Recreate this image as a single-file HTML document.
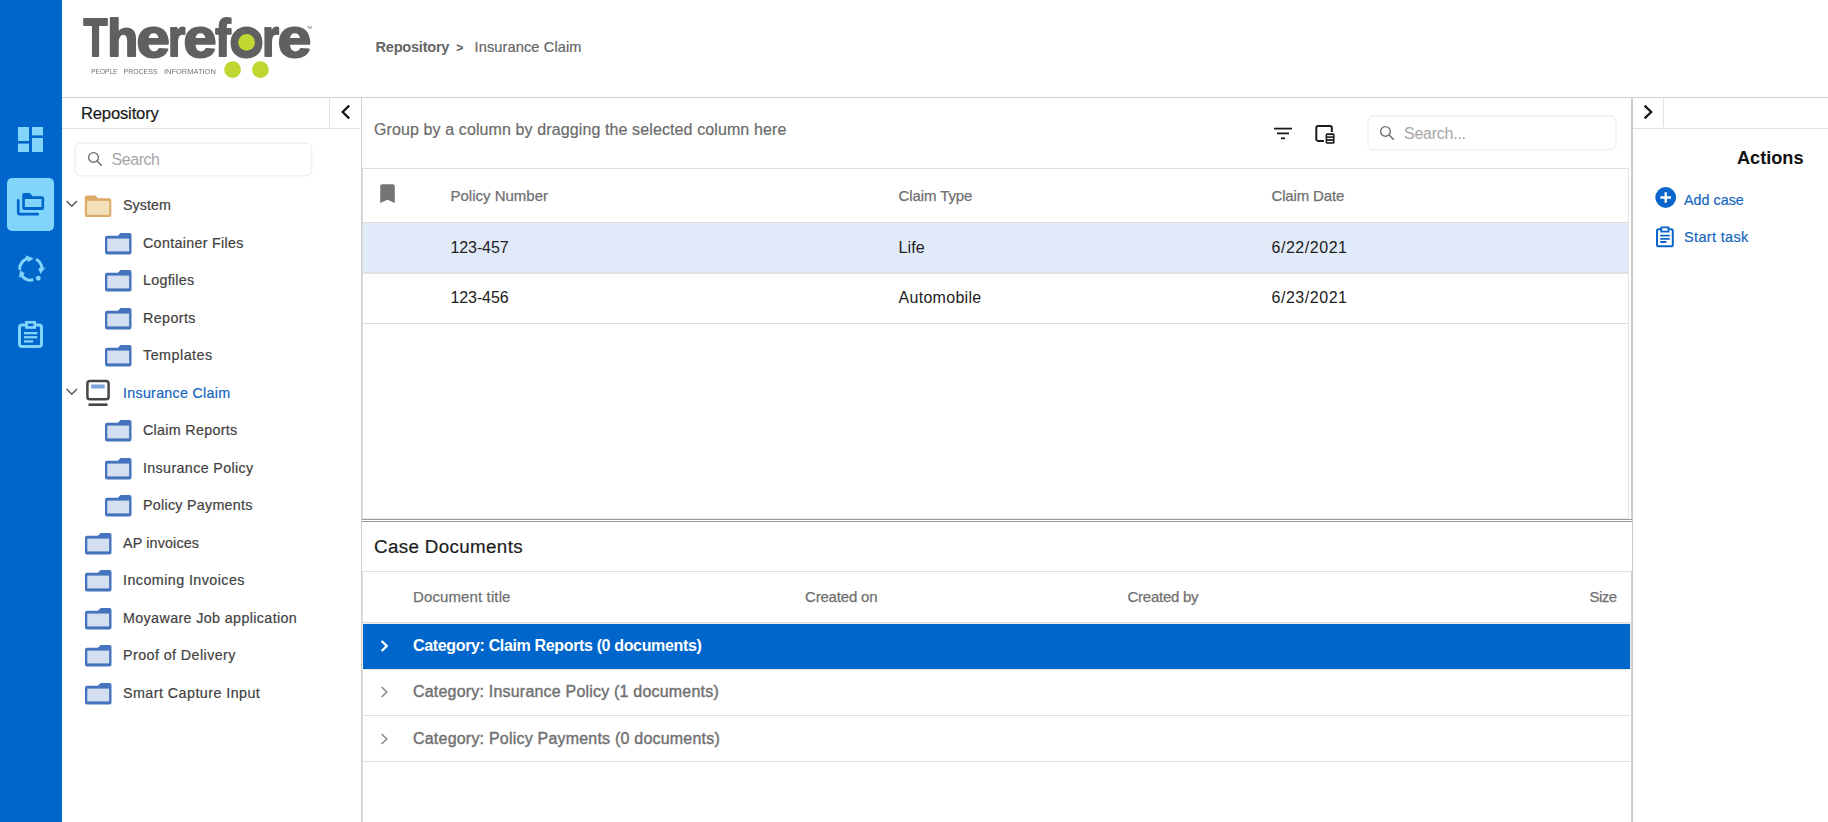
<!DOCTYPE html>
<html lang="en">
<head>
<meta charset="utf-8">
<title>Therefore - Insurance Claim</title>
<style>
*{box-sizing:border-box;margin:0;padding:0}
html,body{width:1828px;height:822px;overflow:hidden;background:#fff}
body{position:relative;font-family:"Liberation Sans",sans-serif;color:#212121}
.abs{position:absolute}
.t{position:absolute;white-space:nowrap;line-height:1}
/* left nav */
#nav{left:0;top:0;width:62px;height:822px;background:#0066cc}
#navsel{left:7px;top:178px;width:47px;height:53px;border-radius:5px;background:#81d4fa}
/* lines */
.hl{position:absolute;height:1px}
.vl{position:absolute;width:1px}
/* tree */
.tree .t{font-size:14.3px;color:#424242;-webkit-text-stroke:0.2px currentColor}
.tree .t.lnk{color:#1565c0}
.hd{font-size:15px;color:#707070;-webkit-text-stroke:0.25px currentColor}
#grp{-webkit-text-stroke:0.2px currentColor}
#reptitle,#cd,#bc3,#a1,#a2{-webkit-text-stroke:0.2px currentColor}
.cell{font-size:16px;color:#212121}
.cat{font-size:16px;font-weight:normal;-webkit-text-stroke:0.4px currentColor}
#cat0{font-weight:bold;-webkit-text-stroke:0}
.lnk{color:#1565c0}
</style>
<style id="ls">
#bc1{letter-spacing:-0.25px}
#bc3{letter-spacing:0.11px}
#reptitle{letter-spacing:-0.17px}
#s1{letter-spacing:-0.44px}
#tr0{letter-spacing:0.03px}
#tr1{letter-spacing:0.30px}
#tr2{letter-spacing:0.26px}
#tr3{letter-spacing:0.41px}
#tr4{letter-spacing:0.50px}
#tr5{letter-spacing:0.27px}
#tr6{letter-spacing:0.30px}
#tr7{letter-spacing:0.35px}
#tr8{letter-spacing:0.27px}
#tr9{letter-spacing:0.15px}
#tr10{letter-spacing:0.44px}
#tr11{letter-spacing:0.37px}
#tr12{letter-spacing:0.42px}
#tr13{letter-spacing:0.45px}
#h0{letter-spacing:-0.00px}
#h1{letter-spacing:-0.09px}
#h2{letter-spacing:-0.15px}
#c00{letter-spacing:-0.10px}
#c01{letter-spacing:0.13px}
#c02{letter-spacing:0.54px}
#c10{letter-spacing:-0.10px}
#c11{letter-spacing:0.29px}
#c12{letter-spacing:0.54px}
#grp{letter-spacing:0.11px}
#s2{letter-spacing:-0.25px}
#cd{letter-spacing:0.35px}
#h3{letter-spacing:0.12px}
#h4{letter-spacing:-0.19px}
#h5{letter-spacing:-0.25px}
#h6{letter-spacing:-0.53px}
#cat0{letter-spacing:-0.35px}
#cat1{letter-spacing:0.20px}
#cat2{letter-spacing:0.21px}
#act{letter-spacing:-0.03px}
#a1{letter-spacing:0.02px}
#a2{letter-spacing:0.34px}
</style>
</head>
<body>
<!-- ============ LEFT NAV ============ -->
<div id="nav" class="abs"></div>
<div id="navsel" class="abs"></div>
<svg class="abs" style="left:0;top:0" width="62" height="822" viewBox="0 0 62 822">
  <!-- dashboard -->
  <g fill="#81d4fa">
    <rect x="18" y="127" width="11" height="14"/>
    <rect x="18" y="143.6" width="11" height="8.4"/>
    <rect x="32" y="127" width="11" height="8.4"/>
    <rect x="32" y="138" width="11" height="14"/>
  </g>
  <!-- folders (selected) -->
  <path d="M18.25 200.4 V212.2 a2 2 0 0 0 2 2 H37.7" fill="none" stroke="#0066cc" stroke-width="2.7" stroke-linecap="round"/>
  <path fill-rule="evenodd" fill="#0066cc" d="M22.2 195.3 a2.2 2.2 0 0 1 2.2 -2.2 h5.4 l2.8 3.1 h9.3 a2.2 2.2 0 0 1 2.2 2.2 v9.3 a2.2 2.2 0 0 1 -2.2 2.2 h-17.5 a2.2 2.2 0 0 1 -2.2 -2.2 z M24.9 199.1 h16.6 v7.8 h-16.6 z"/>
  <!-- cycle -->
  <g id="cyc"><path d="M19.73 269.77 A11.1 11.1 0 0 1 27.19 258.50" fill="none" stroke="#81d4fa" stroke-width="3"/><path d="M28.15 262.09 L25.50 255.18 L33.78 258.62 Z" fill="#81d4fa"/><path d="M36.01 259.20 A11.1 11.1 0 0 1 41.87 268.23" fill="none" stroke="#81d4fa" stroke-width="3"/><path d="M38.16 268.23 L45.52 267.45 L40.42 273.90 Z" fill="#81d4fa"/><path d="M33.30 279.82 A11.1 11.1 0 0 1 21.71 275.37" fill="none" stroke="#81d4fa" stroke-width="3"/><path d="M24.89 273.45 L18.98 277.91 L20.08 270.32 Z" fill="#81d4fa"/><circle cx="38.29" cy="278.25" r="2.4" fill="#81d4fa"/></g>
  <!-- clipboard -->
  <g fill="none" stroke="#81d4fa">
    <rect x="19.5" y="325" width="22" height="21.5" rx="2.5" stroke-width="3"/>
    <rect x="26.5" y="322.3" width="8.2" height="5.2" stroke-width="2.7" fill="#0066cc"/>
  </g>
  <g fill="#81d4fa">
    <rect x="24" y="332" width="13.3" height="2.3"/>
    <rect x="24" y="336.1" width="13.3" height="2.3"/>
    <rect x="24" y="340.3" width="9.2" height="2.3"/>
  </g>
</svg>

<!-- ============ HEADER ============ -->
<svg class="abs" style="left:0;top:0;will-change:transform" width="362" height="97" viewBox="0 0 362 97">
<text font-family="Liberation Sans, sans-serif" font-weight="bold" fill="#5f6062" stroke="#5f6062" stroke-width="2" stroke-linejoin="round"><tspan x="83.56" y="56.00" font-size="53.49" textLength="24.07" lengthAdjust="spacingAndGlyphs">T</tspan><tspan x="107.36" y="56.00" font-size="51.20" textLength="30.99" lengthAdjust="spacingAndGlyphs">h</tspan><tspan x="136.46" y="56.77" font-size="54.58" textLength="33.28" lengthAdjust="spacingAndGlyphs">e</tspan><tspan x="168.07" y="56.00" font-size="52.73" textLength="17.30" lengthAdjust="spacingAndGlyphs">r</tspan><tspan x="183.48" y="56.77" font-size="54.58" textLength="33.05" lengthAdjust="spacingAndGlyphs">e</tspan><tspan x="215.21" y="56.00" font-size="52.44" textLength="15.40" lengthAdjust="spacingAndGlyphs">f</tspan><tspan x="229.63" y="56.67" font-size="54.03" textLength="33.94" lengthAdjust="spacingAndGlyphs">o</tspan><tspan x="262.25" y="56.00" font-size="52.73" textLength="16.80" lengthAdjust="spacingAndGlyphs">r</tspan><tspan x="277.65" y="56.77" font-size="54.58" textLength="33.51" lengthAdjust="spacingAndGlyphs">e</tspan></text>
<circle cx="246.6" cy="42.4" r="15.8" fill="#5f6062"/>
<circle cx="246.6" cy="42.4" r="8.4" fill="#bfd730"/>
<circle cx="232.6" cy="69.6" r="8.4" fill="#bfd730"/>
<circle cx="260.4" cy="69.6" r="8.4" fill="#bfd730"/>
<text x="307" y="28.8" font-family="Liberation Sans, sans-serif" font-size="3.6" fill="#5f6062" textLength="5" lengthAdjust="spacingAndGlyphs">TM</text>
<g font-family="Liberation Sans, sans-serif" font-size="7.4" fill="#727375"><text x="91.2" y="73.7" textLength="26.2" lengthAdjust="spacingAndGlyphs">PEOPLE</text><text x="123.5" y="73.7" textLength="34" lengthAdjust="spacingAndGlyphs">PROCESS</text><text x="164" y="73.7" textLength="51.8" lengthAdjust="spacingAndGlyphs">INFORMATION</text></g>
</svg>
<div class="t" style="left:375.5px;top:40px;font-size:14.6px;font-weight:bold;color:#666" id="bc1">Repository</div>
<div class="t" style="left:456.3px;top:41.6px;font-size:12.2px;font-weight:bold;color:#555" id="bc2">&gt;</div>
<div class="t" style="left:474.5px;top:40px;font-size:14.6px;color:#666" id="bc3">Insurance Claim</div>

<!-- main lines -->
<div class="hl" style="left:62px;top:97px;width:1766px;background:#cfcfcf"></div>
<div class="vl" style="left:361px;top:97px;height:725px;background:#cfcfcf"></div>
<div class="vl" style="left:329px;top:98px;height:29px;background:#dfe3e3"></div>
<div class="hl" style="left:62px;top:128px;width:298px;background:#dfe3e3"></div>
<div class="vl" style="left:1632px;top:97px;height:725px;background:#cbcbcb"></div>
<div class="vl" style="left:1631px;top:97px;height:422px;background:#cbcbcb"></div>
<div class="vl" style="left:1631px;top:571px;height:251px;background:#d2d2d2"></div>
<div class="vl" style="left:1663px;top:98px;height:29px;background:#dfe3e3"></div>
<div class="hl" style="left:1633px;top:128px;width:195px;background:#dfe3e3"></div>

<!-- ============ REPOSITORY PANEL ============ -->
<div class="t" style="left:81px;top:106.2px;font-size:16.6px;color:#1c1c1c" id="reptitle">Repository</div>
<svg class="abs" style="left:336.6px;top:102px" width="18" height="20" viewBox="0 0 18 20"><path d="M12.2 3.6 L5.6 10 L12.2 16.4" fill="none" stroke="#111" stroke-width="2.2"/></svg>
<svg class="abs" style="left:70px;top:138px" width="250" height="44" viewBox="70 138 250 44"><rect x="75.05" y="143.05" width="236.8" height="32.8" rx="5.5" fill="#fff" stroke="#eaeaea" stroke-width="1"/></svg>
<svg class="abs" style="left:86px;top:150px" width="18" height="18" viewBox="0 0 18 18"><circle cx="7.5" cy="7.4" r="4.85" fill="none" stroke="#6e6e6e" stroke-width="1.35"/><path d="M10.9 10.8 L15.8 15.7" stroke="#6e6e6e" stroke-width="1.55" fill="none"/></svg>
<div class="t" style="left:111.5px;top:151.5px;font-size:16px;color:#a6a6a6" id="s1">Search</div>
<div class="tree">
<svg class="abs" style="left:65px;top:196.9px" width="14" height="14" viewBox="0 0 14 14"><path d="M1.6 4 L6.8 9.2 L12 4" fill="none" stroke="#5a5a5a" stroke-width="1.5"/></svg>
<svg class="abs" style="left:84px;top:193.5px" width="29" height="25" viewBox="0 0 29 25"><path d="M0.8 3.5 a2 2 0 0 1 2 -2 h8.6 l2.6 2.7 h11.3 a2 2 0 0 1 2 2 v14.9 a2 2 0 0 1 -2 2 h-22.5 a2 2 0 0 1 -2 -2 z" fill="#dcab68"/><rect x="3.1" y="6.9" width="22.2" height="13.9" fill="#f1e0b8"/></svg>
<div class="t" style="left:123px;top:197.7px" id="tr0">System</div>
<svg class="abs" style="left:104px;top:230.7px" width="29" height="25" viewBox="0 0 29 25"><path d="M1 6.7 a2 2 0 0 1 2 -2 h10.8 l2.9 -2.8 h8.8 a2 2 0 0 1 2 2 v17.6 a2 2 0 0 1 -2 2 h-22.5 a2 2 0 0 1 -2 -2 z" fill="#4673bd"/><rect x="3.3" y="7.6" width="21.8" height="12.8" fill="#d4e0f1"/></svg>
<div class="t" style="left:143px;top:236.2px" id="tr1">Container Files</div>
<svg class="abs" style="left:104px;top:268.2px" width="29" height="25" viewBox="0 0 29 25"><path d="M1 6.7 a2 2 0 0 1 2 -2 h10.8 l2.9 -2.8 h8.8 a2 2 0 0 1 2 2 v17.6 a2 2 0 0 1 -2 2 h-22.5 a2 2 0 0 1 -2 -2 z" fill="#4673bd"/><rect x="3.3" y="7.6" width="21.8" height="12.8" fill="#d4e0f1"/></svg>
<div class="t" style="left:143px;top:272.7px" id="tr2">Logfiles</div>
<svg class="abs" style="left:104px;top:305.7px" width="29" height="25" viewBox="0 0 29 25"><path d="M1 6.7 a2 2 0 0 1 2 -2 h10.8 l2.9 -2.8 h8.8 a2 2 0 0 1 2 2 v17.6 a2 2 0 0 1 -2 2 h-22.5 a2 2 0 0 1 -2 -2 z" fill="#4673bd"/><rect x="3.3" y="7.6" width="21.8" height="12.8" fill="#d4e0f1"/></svg>
<div class="t" style="left:143px;top:311.2px" id="tr3">Reports</div>
<svg class="abs" style="left:104px;top:343.2px" width="29" height="25" viewBox="0 0 29 25"><path d="M1 6.7 a2 2 0 0 1 2 -2 h10.8 l2.9 -2.8 h8.8 a2 2 0 0 1 2 2 v17.6 a2 2 0 0 1 -2 2 h-22.5 a2 2 0 0 1 -2 -2 z" fill="#4673bd"/><rect x="3.3" y="7.6" width="21.8" height="12.8" fill="#d4e0f1"/></svg>
<div class="t" style="left:143px;top:347.7px" id="tr4">Templates</div>
<svg class="abs" style="left:65px;top:385.1px" width="14" height="14" viewBox="0 0 14 14"><path d="M1.6 4 L6.8 9.2 L12 4" fill="none" stroke="#5a5a5a" stroke-width="1.5"/></svg>
<svg class="abs" style="left:84px;top:378px" width="28" height="30" viewBox="0 0 28 30"><rect x="3.4" y="2.9" width="21.2" height="18.4" rx="2.6" fill="#fff" stroke="#464646" stroke-width="2.5"/><rect x="7.2" y="6.5" width="13.5" height="4" fill="#7ea3d9"/><rect x="4.5" y="25.4" width="19" height="2.6" fill="#464646"/></svg>
<div class="t lnk" style="left:123px;top:386.2px" id="tr5">Insurance Claim</div>
<svg class="abs" style="left:104px;top:418.2px" width="29" height="25" viewBox="0 0 29 25"><path d="M1 6.7 a2 2 0 0 1 2 -2 h10.8 l2.9 -2.8 h8.8 a2 2 0 0 1 2 2 v17.6 a2 2 0 0 1 -2 2 h-22.5 a2 2 0 0 1 -2 -2 z" fill="#4673bd"/><rect x="3.3" y="7.6" width="21.8" height="12.8" fill="#d4e0f1"/></svg>
<div class="t" style="left:143px;top:422.7px" id="tr6">Claim Reports</div>
<svg class="abs" style="left:104px;top:455.7px" width="29" height="25" viewBox="0 0 29 25"><path d="M1 6.7 a2 2 0 0 1 2 -2 h10.8 l2.9 -2.8 h8.8 a2 2 0 0 1 2 2 v17.6 a2 2 0 0 1 -2 2 h-22.5 a2 2 0 0 1 -2 -2 z" fill="#4673bd"/><rect x="3.3" y="7.6" width="21.8" height="12.8" fill="#d4e0f1"/></svg>
<div class="t" style="left:143px;top:461.2px" id="tr7">Insurance Policy</div>
<svg class="abs" style="left:104px;top:493.2px" width="29" height="25" viewBox="0 0 29 25"><path d="M1 6.7 a2 2 0 0 1 2 -2 h10.8 l2.9 -2.8 h8.8 a2 2 0 0 1 2 2 v17.6 a2 2 0 0 1 -2 2 h-22.5 a2 2 0 0 1 -2 -2 z" fill="#4673bd"/><rect x="3.3" y="7.6" width="21.8" height="12.8" fill="#d4e0f1"/></svg>
<div class="t" style="left:143px;top:497.7px" id="tr8">Policy Payments</div>
<svg class="abs" style="left:84px;top:530.7px" width="29" height="25" viewBox="0 0 29 25"><path d="M1 6.7 a2 2 0 0 1 2 -2 h10.8 l2.9 -2.8 h8.8 a2 2 0 0 1 2 2 v17.6 a2 2 0 0 1 -2 2 h-22.5 a2 2 0 0 1 -2 -2 z" fill="#4673bd"/><rect x="3.3" y="7.6" width="21.8" height="12.8" fill="#d4e0f1"/></svg>
<div class="t" style="left:123px;top:536.2px" id="tr9">AP invoices</div>
<svg class="abs" style="left:84px;top:568.2px" width="29" height="25" viewBox="0 0 29 25"><path d="M1 6.7 a2 2 0 0 1 2 -2 h10.8 l2.9 -2.8 h8.8 a2 2 0 0 1 2 2 v17.6 a2 2 0 0 1 -2 2 h-22.5 a2 2 0 0 1 -2 -2 z" fill="#4673bd"/><rect x="3.3" y="7.6" width="21.8" height="12.8" fill="#d4e0f1"/></svg>
<div class="t" style="left:123px;top:572.7px" id="tr10">Incoming Invoices</div>
<svg class="abs" style="left:84px;top:605.7px" width="29" height="25" viewBox="0 0 29 25"><path d="M1 6.7 a2 2 0 0 1 2 -2 h10.8 l2.9 -2.8 h8.8 a2 2 0 0 1 2 2 v17.6 a2 2 0 0 1 -2 2 h-22.5 a2 2 0 0 1 -2 -2 z" fill="#4673bd"/><rect x="3.3" y="7.6" width="21.8" height="12.8" fill="#d4e0f1"/></svg>
<div class="t" style="left:123px;top:611.2px" id="tr11">Moyaware Job application</div>
<svg class="abs" style="left:84px;top:643.2px" width="29" height="25" viewBox="0 0 29 25"><path d="M1 6.7 a2 2 0 0 1 2 -2 h10.8 l2.9 -2.8 h8.8 a2 2 0 0 1 2 2 v17.6 a2 2 0 0 1 -2 2 h-22.5 a2 2 0 0 1 -2 -2 z" fill="#4673bd"/><rect x="3.3" y="7.6" width="21.8" height="12.8" fill="#d4e0f1"/></svg>
<div class="t" style="left:123px;top:647.7px" id="tr12">Proof of Delivery</div>
<svg class="abs" style="left:84px;top:680.7px" width="29" height="25" viewBox="0 0 29 25"><path d="M1 6.7 a2 2 0 0 1 2 -2 h10.8 l2.9 -2.8 h8.8 a2 2 0 0 1 2 2 v17.6 a2 2 0 0 1 -2 2 h-22.5 a2 2 0 0 1 -2 -2 z" fill="#4673bd"/><rect x="3.3" y="7.6" width="21.8" height="12.8" fill="#d4e0f1"/></svg>
<div class="t" style="left:123px;top:686.2px" id="tr13">Smart Capture Input</div>
</div>

<!-- ============ MAIN GRID ============ -->
<div class="t" style="left:374px;top:122px;font-size:16px;color:#6b6b6b" id="grp">Group by a column by dragging the selected column here</div>
<svg class="abs" style="left:1271px;top:121px" width="24" height="24" viewBox="0 0 24 24"><g fill="#1c1c1c"><rect x="3" y="6.7" width="18" height="1.8"/><rect x="6" y="11.5" width="12" height="1.8"/><rect x="10" y="16.4" width="4" height="1.8"/></g></svg>
<svg class="abs" style="left:1313px;top:123px" width="26" height="24" viewBox="0 0 26 24"><path d="M10.9 17.9 H5 a1.7 1.7 0 0 1 -1.7 -1.7 V4.7 a1.7 1.7 0 0 1 1.7 -1.7 H17.1 a1.7 1.7 0 0 1 1.7 1.7 V9" fill="none" stroke="#1c1c1c" stroke-width="2"/><rect x="12.6" y="10.3" width="9" height="10.5" rx="1.6" fill="#1c1c1c"/><g fill="#fff"><rect x="14.1" y="12.1" width="5.9" height="1.2"/><rect x="14.1" y="14.9" width="5.9" height="1.2"/><rect x="14.1" y="17.9" width="5.9" height="1.2"/></g></svg>
<svg class="abs" style="left:1362px;top:110px" width="262" height="46" viewBox="1362 110 262 46"><rect x="1368" y="115.9" width="248" height="34" rx="5.5" fill="#fff" stroke="#eaeaea" stroke-width="1"/></svg>
<svg class="abs" style="left:1378px;top:124px" width="18" height="18" viewBox="0 0 18 18"><circle cx="7.5" cy="7.4" r="4.85" fill="none" stroke="#6e6e6e" stroke-width="1.35"/><path d="M10.9 10.8 L15.8 15.7" stroke="#6e6e6e" stroke-width="1.55" fill="none"/></svg>
<div class="t" style="left:1404px;top:125.5px;font-size:16px;color:#a6a6a6" id="s2">Search...</div>
<div class="abs" style="left:362px;top:168px;width:1267px;height:351px;border:1px solid #dedede;border-bottom-color:#e6e6e6;border-right-color:#e4e4e4"></div>
<div class="hl" style="left:363px;top:222px;width:1265px;background:#dddddd"></div>
<div class="abs" style="left:363px;top:223px;width:1265px;height:51px;background:#e1eaf8;border-bottom:2px solid #dfe2e3"></div>
<div class="hl" style="left:363px;top:323px;width:1265px;background:#dcdcdc"></div>
<svg class="abs" style="left:375px;top:181px" width="25" height="25" viewBox="0 0 24 24"><path d="M17 3H7c-1.100 0-1.990.9-1.990 2L5 21l7-3 7 3V5c0-1.100-.9-2-2-2z" fill="#757575"/></svg>
<div class="t hd" style="left:450.5px;top:188px" id="h0">Policy Number</div>
<div class="t hd" style="left:898.5px;top:188px" id="h1">Claim Type</div>
<div class="t hd" style="left:1271.5px;top:188px" id="h2">Claim Date</div>
<div class="t cell" style="left:450.5px;top:240px" id="c00">123-457</div>
<div class="t cell" style="left:898.5px;top:240px" id="c01">Life</div>
<div class="t cell" style="left:1271.5px;top:240px" id="c02">6/22/2021</div>
<div class="t cell" style="left:450.5px;top:290px" id="c10">123-456</div>
<div class="t cell" style="left:898.5px;top:290px" id="c11">Automobile</div>
<div class="t cell" style="left:1271.5px;top:290px" id="c12">6/23/2021</div>
<div class="hl" style="left:362px;top:519px;width:1270px;height:3px;background:#fff;border-top:1px solid #9b9b9b;border-bottom:1px solid #9b9b9b"></div>
<!-- ============ CASE DOCUMENTS ============ -->
<div class="t" style="left:374px;top:538.4px;font-size:18.8px;color:#1c1c1c" id="cd">Case Documents</div>
<div class="hl" style="left:362px;top:571px;width:1269px;background:#e0e0e0"></div>
<div class="vl" style="left:362px;top:571px;height:251px;background:#e0e0e0"></div>
<div class="t hd" style="left:413px;top:589px" id="h3">Document title</div>
<div class="t hd" style="left:805px;top:589px" id="h4">Created on</div>
<div class="t hd" style="left:1127.5px;top:589px" id="h5">Created by</div>
<div class="t hd" style="left:1589.5px;top:589px" id="h6">Size</div>
<div class="hl" style="left:363px;top:622px;width:1267px;background:#dedede"></div>
<div class="abs" style="left:362px;top:623px;width:1269px;height:47px;background:#f1ece8"></div>
<div class="abs" style="left:363px;top:624px;width:1267px;height:45px;background:#0066cc"></div>
<div class="hl" style="left:363px;top:715px;width:1267px;background:#e0e0e0"></div>
<div class="hl" style="left:363px;top:761px;width:1267px;background:#e0e0e0"></div>
<svg class="abs" style="left:378px;top:638px" width="14" height="16" viewBox="0 0 14 16"><path d="M3.6 3 L8.8 8 L3.6 13" fill="none" stroke="#fff" stroke-width="2.3"/></svg>
<div class="t cat" style="left:413px;top:637.5px;color:#fff" id="cat0">Category: Claim Reports (0 documents)</div>
<svg class="abs" style="left:378px;top:684px" width="14" height="16" viewBox="0 0 14 16"><path d="M3.6 3 L8.8 8 L3.6 13" fill="none" stroke="#8a8a8a" stroke-width="1.6"/></svg>
<div class="t cat" style="left:413px;top:683.5px;color:#707070" id="cat1">Category: Insurance Policy (1 documents)</div>
<svg class="abs" style="left:378px;top:730.5px" width="14" height="16" viewBox="0 0 14 16"><path d="M3.6 3 L8.8 8 L3.6 13" fill="none" stroke="#8a8a8a" stroke-width="1.6"/></svg>
<div class="t cat" style="left:413px;top:731.0px;color:#707070" id="cat2">Category: Policy Payments (0 documents)</div>
<!-- ============ ACTIONS PANEL ============ -->
<svg class="abs" style="left:1639px;top:102px" width="18" height="20" viewBox="0 0 18 20"><path d="M5.6 3.6 L12.2 10 L5.6 16.4" fill="none" stroke="#111" stroke-width="2.2"/></svg>
<div class="t" style="left:1737px;top:148.5px;font-size:18.2px;font-weight:bold;color:#111" id="act">Actions</div>
<svg class="abs" style="left:1655px;top:187px" width="22" height="22" viewBox="0 0 22 22"><circle cx="10.7" cy="10.5" r="10.4" fill="#0a66cc"/><path d="M5.4 10.5 h10.6 M10.7 5.2 v10.6" stroke="#fff" stroke-width="2.3"/></svg>
<div class="t lnk" style="left:1684px;top:192.5px;font-size:14.3px" id="a1">Add case</div>
<svg class="abs" style="left:1654px;top:225px" width="22" height="24" viewBox="0 0 22 24"><rect x="3" y="4.3" width="15.8" height="17" rx="1.6" fill="none" stroke="#0a66cc" stroke-width="2"/><rect x="7.3" y="2.4" width="7.2" height="4.2" fill="#fff" stroke="#0a66cc" stroke-width="1.8"/><path d="M6.2 10.6 h9.6 M6.2 13.8 h9.6 M6.2 17 h6.2" stroke="#0a66cc" stroke-width="1.8"/></svg>
<div class="t lnk" style="left:1684px;top:229.7px;font-size:14.5px" id="a2">Start task</div>

</body>
</html>
